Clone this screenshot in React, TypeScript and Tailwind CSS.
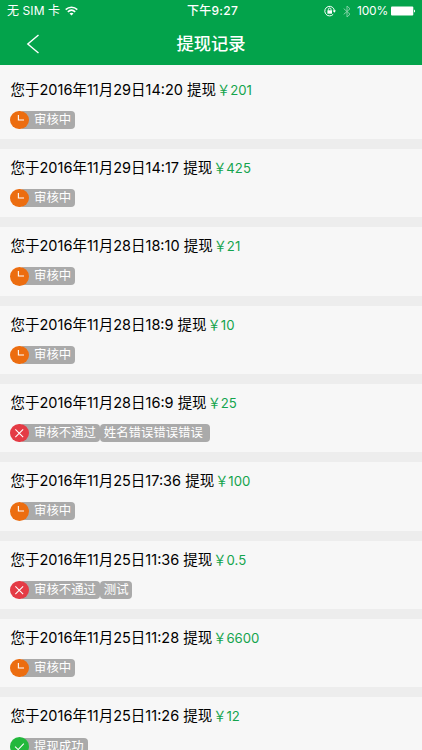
import clsx from "clsx";

type Status = "pending" | "rejected" | "success";

interface WithdrawalRecord {
  readonly time: string;
  readonly amount: string;
  readonly status: Status;
  /** Extra tag shown after the status, e.g. why a request was rejected. */
  readonly reason?: string;
}

const records: readonly WithdrawalRecord[] = [
  { time: "2016年11月29日14:20", amount: "201", status: "pending" },
  { time: "2016年11月29日14:17", amount: "425", status: "pending" },
  { time: "2016年11月28日18:10", amount: "21", status: "pending" },
  { time: "2016年11月28日18:9", amount: "10", status: "pending" },
  { time: "2016年11月28日16:9", amount: "25", status: "rejected", reason: "姓名错误错误错误\u00a0" },
  { time: "2016年11月25日17:36", amount: "100", status: "pending" },
  { time: "2016年11月25日11:36", amount: "0.5", status: "rejected", reason: "测试" },
  { time: "2016年11月25日11:28", amount: "6600", status: "pending" },
  { time: "2016年11月25日11:26", amount: "12", status: "success" },
];

const statusConfig: Record<Status, { label: string; color: string; path: string }> = {
  pending: { label: "审核中", color: "bg-[#ec6d10]", path: "M8.6 4.2V9.3H14.4" },
  rejected: { label: "审核不通过", color: "bg-[#e43b45]", path: "M5.5 5.5L13.5 13.5M13.5 5.5L5.5 13.5" },
  success: { label: "提现成功", color: "bg-[#22b83c]", path: "M5.2 9.8L8.4 12.9L14.2 6.7" },
};

function StatusBar() {
  return (
    <div className="flex h-[22px] items-center justify-between pr-[6px] pl-[7px] text-[12px] leading-[22px]">
      <div className="flex flex-1 items-center gap-[5px]">
        <span className="tracking-[0.1px]">无 SIM 卡</span>
        <svg width="13" height="10" viewBox="0 0 13 10" fill="none" stroke="currentColor" strokeWidth="1.5">
          <path d="M0.7 3.6C4 0.3 9 0.3 12.3 3.6" />
          <path d="M2.8 5.9C5 3.8 8 3.8 10.2 5.9" />
          <path d="M6.5 9.6L4.5 7.6C5.7 6.5 7.3 6.5 8.5 7.6Z" fill="currentColor" stroke="none" />
        </svg>
      </div>
      <span className="pl-[2px] font-medium tracking-[0.3px]">下午9:27</span>
      <div className="flex flex-1 items-center justify-end">
        <svg width="12" height="12" viewBox="0 0 12 12" fill="none" stroke="currentColor">
          <path d="M9.2 9.3A4.8 4.8 0 1 1 10.4 6" />
          <path d="M8.6 5.4H12L10.3 7.7Z" fill="currentColor" stroke="none" />
          <rect x="3.4" y="5.3" width="4.6" height="3.4" fill="currentColor" stroke="none" />
          <path d="M4.4 5.5V4.3A1.3 1.3 0 0 1 7 4.3V5.5" strokeWidth="0.9" />
        </svg>
        <svg className="ml-[7px] opacity-55" width="8" height="13" viewBox="0 0 8 13" fill="none" stroke="currentColor" strokeWidth="0.9">
          <path d="M0.7 3.6L7 9.2L4 12V1L7 3.8L0.7 9.4" />
        </svg>
        <span className="ml-[6px] tracking-[-0.2px]">100%</span>
        <svg className="ml-[3px]" width="25" height="10" viewBox="0 0 25 10" fill="currentColor">
          <rect x="0" y="0.6" width="22.3" height="8.8" rx="1" />
          <path d="M23 3.4C24.5 3.9 24.5 6.1 23 6.6Z" />
        </svg>
      </div>
    </div>
  );
}

function TitleBar() {
  return (
    <div className="grid h-[43px] grid-cols-[1fr_auto_1fr] items-center">
      <svg className="ml-[26px]" width="14" height="20" viewBox="0 0 14 20" fill="none" stroke="currentColor" strokeWidth="1.4">
        <path d="M12.5 1L1.8 10L12.5 19" />
      </svg>
      <h1 className="text-[17.3px] leading-[24px] font-medium">提现记录</h1>
    </div>
  );
}

function StatusTag({ status, reason }: Pick<WithdrawalRecord, "status" | "reason">) {
  const { label, color, path } = statusConfig[status];

  return (
    <div className="-ml-[0.5px] flex h-[18.5px] items-center text-[12.4px] leading-[18px] text-white">
      <span className={clsx("z-10 h-[18.5px] w-[18.5px] shrink-0 rounded-full", color)}>
        <svg width="18.5" height="18.5" viewBox="0 0 19 19" fill="none" stroke="currentColor" strokeWidth="1.1">
          <path d={path} />
        </svg>
      </span>
      <span className="-ml-[9px] h-[18px] rounded-[4px] bg-[#aaaaaa] pr-[4px] pl-[14.5px]">{label}</span>
      {reason ? <span className="h-[18px] rounded-[4px] bg-[#aaaaaa] px-[3.8px]">{reason}</span> : null}
    </div>
  );
}

function RecordRow({ time, amount, status, reason }: WithdrawalRecord) {
  return (
    <li className="h-[78.35px] shrink-0 border-b-[10px] border-[#ededed] bg-[#f7f7f7] pt-[9px] pl-[10.5px]">
      <p className="flex h-[20px] items-center text-[14.5px] leading-[20px] whitespace-nowrap text-black">
        <span>您于{time} 提现</span>
        <span className="ml-[1px] text-[13.2px] text-[#14a44d]">￥{amount}</span>
      </p>
      <div className="mt-[11px]">
        <StatusTag status={status} reason={reason} />
      </div>
    </li>
  );
}

export default function App() {
  return (
    <div className="flex h-[750px] w-[422px] flex-col overflow-hidden bg-[#f7f7f7] font-['Inter','Noto_Sans_CJK_SC',sans-serif]">
      <header className="h-[65px] shrink-0 bg-[#03a34b] text-white">
        <StatusBar />
        <TitleBar />
      </header>
      <ul className="flex min-h-0 flex-1 flex-col overflow-hidden pt-[5.5px]">
        {records.map((record) => (
          <RecordRow key={record.time} {...record} />
        ))}
      </ul>
    </div>
  );
}
